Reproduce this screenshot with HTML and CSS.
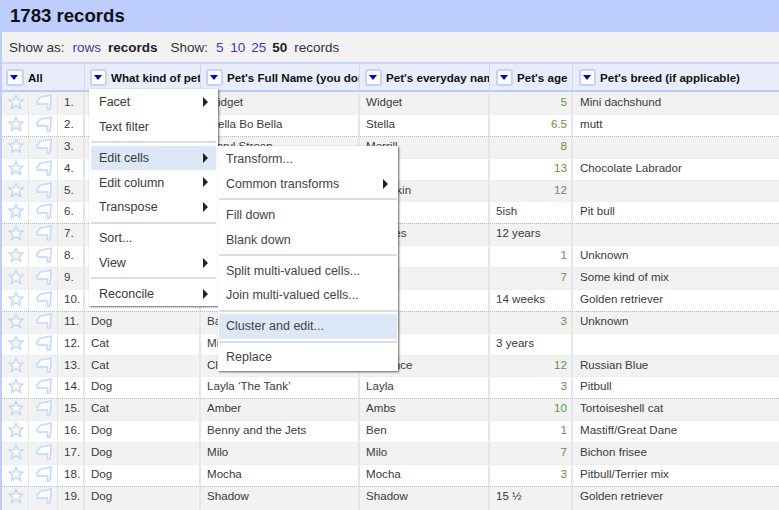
FILE: index.html
```html
<!DOCTYPE html>
<html lang="en">
<head>
<meta charset="utf-8">
<title>1783 records</title>
<link rel="stylesheet" href="styles.css">
</head>
<body>
<svg class="defs" width="0" height="0" aria-hidden="true">
  <symbol id="star" viewBox="0 0 16 16"><path d="M8 1.200 10 6h5.200l-4.100 3.300 1.600 5.300L8 11.500l-4.700 3.100 1.600-5.300L.8 6H6z" fill="#fff" stroke="#c3dcfb" stroke-width="1.600" stroke-linejoin="round"/></symbol>
  <symbol id="flag" viewBox="0 0 16 16"><path d="M.9 7.500 4.200 3.200C7 2.400 11 2.200 15.200 1.200L14.600 10 13.800 15 11.400 15.600 11.600 10C8.500 9.800 5 10.200 1.800 10.200Z" fill="#fff" stroke="#c3dcfb" stroke-width="1.700" stroke-linejoin="round"/></symbol>
</svg>
<main class="page">
  <h1 class="title">1783 records</h1>
  <div class="viewbar">
    <span>Show as:</span><a class="link gap-a">rows</a><b class="gap-b">records</b>
    <span class="gap-c">Show:</span><a class="link gap-d">5</a><a class="link gap-e">10</a><a class="link gap-f">25</a><b class="gap-f">50</b><span class="gap-g">records</span>
  </div>
  <div class="table">
    <div class="row head">
      <div class="hc c-all"><span class="btn"></span><span class="hname">All</span></div>
      <div class="hc c-kind"><span class="btn"></span><span class="hname">What kind of pet</span></div>
      <div class="hc c-name"><span class="btn"></span><span class="hname">Pet's Full Name (you don't have to)</span></div>
      <div class="hc c-day"><span class="btn"></span><span class="hname">Pet's everyday name</span></div>
      <div class="hc c-age"><span class="btn"></span><span class="hname">Pet's age</span></div>
      <div class="hc c-breed"><span class="btn"></span><span class="hname">Pet's breed (if applicable)</span></div>
    </div>
    <div class="row data odd"><div class="cell c-star"><svg class="ico"><use href="#star"/></svg></div><div class="cell c-flag"><svg class="ico"><use href="#flag"/></svg></div><div class="cell c-idx">1.</div><div class="cell c-kind">Dog</div><div class="cell c-name">Widget</div><div class="cell c-day">Widget</div><div class="cell c-age num">5</div><div class="cell c-breed">Mini dachshund</div></div>
    <div class="row data even"><div class="cell c-star"><svg class="ico"><use href="#star"/></svg></div><div class="cell c-flag"><svg class="ico"><use href="#flag"/></svg></div><div class="cell c-idx">2.</div><div class="cell c-kind">Dog</div><div class="cell c-name">Stella Bo Bella</div><div class="cell c-day">Stella</div><div class="cell c-age num">6.5</div><div class="cell c-breed">mutt</div></div>
    <div class="row data odd rec"><div class="cell c-star"><svg class="ico"><use href="#star"/></svg></div><div class="cell c-flag"><svg class="ico"><use href="#flag"/></svg></div><div class="cell c-idx">3.</div><div class="cell c-kind">Cat</div><div class="cell c-name">Meryl Streep</div><div class="cell c-day">Merrill</div><div class="cell c-age num">8</div><div class="cell c-breed"></div></div>
    <div class="row data even"><div class="cell c-star"><svg class="ico"><use href="#star"/></svg></div><div class="cell c-flag"><svg class="ico"><use href="#flag"/></svg></div><div class="cell c-idx">4.</div><div class="cell c-kind">Dog</div><div class="cell c-name">Coco</div><div class="cell c-day">Coco</div><div class="cell c-age num">13</div><div class="cell c-breed">Chocolate Labrador</div></div>
    <div class="row data odd"><div class="cell c-star"><svg class="ico"><use href="#star"/></svg></div><div class="cell c-flag"><svg class="ico"><use href="#flag"/></svg></div><div class="cell c-idx">5.</div><div class="cell c-kind">Cat</div><div class="cell c-name">Pumpkin</div><div class="cell c-day">Pumpkin</div><div class="cell c-age num">12</div><div class="cell c-breed"></div></div>
    <div class="row data even"><div class="cell c-star"><svg class="ico"><use href="#star"/></svg></div><div class="cell c-flag"><svg class="ico"><use href="#flag"/></svg></div><div class="cell c-idx">6.</div><div class="cell c-kind">Dog</div><div class="cell c-name">Roo</div><div class="cell c-day">Roo</div><div class="cell c-age">5ish</div><div class="cell c-breed">Pit bull</div></div>
    <div class="row data odd rec"><div class="cell c-star"><svg class="ico"><use href="#star"/></svg></div><div class="cell c-flag"><svg class="ico"><use href="#flag"/></svg></div><div class="cell c-idx">7.</div><div class="cell c-kind">Cat</div><div class="cell c-name">Hermes</div><div class="cell c-day">Hermes</div><div class="cell c-age">12 years</div><div class="cell c-breed"></div></div>
    <div class="row data even"><div class="cell c-star"><svg class="ico"><use href="#star"/></svg></div><div class="cell c-flag"><svg class="ico"><use href="#flag"/></svg></div><div class="cell c-idx">8.</div><div class="cell c-kind">Dog</div><div class="cell c-name">Rex</div><div class="cell c-day">Rex</div><div class="cell c-age num">1</div><div class="cell c-breed">Unknown</div></div>
    <div class="row data odd"><div class="cell c-star"><svg class="ico"><use href="#star"/></svg></div><div class="cell c-flag"><svg class="ico"><use href="#flag"/></svg></div><div class="cell c-idx">9.</div><div class="cell c-kind">Dog</div><div class="cell c-name">Max</div><div class="cell c-day">Max</div><div class="cell c-age num">7</div><div class="cell c-breed">Some kind of mix</div></div>
    <div class="row data even"><div class="cell c-star"><svg class="ico"><use href="#star"/></svg></div><div class="cell c-flag"><svg class="ico"><use href="#flag"/></svg></div><div class="cell c-idx">10.</div><div class="cell c-kind">Dog</div><div class="cell c-name">Sam</div><div class="cell c-day">Sam</div><div class="cell c-age">14 weeks</div><div class="cell c-breed">Golden retriever</div></div>
    <div class="row data odd rec"><div class="cell c-star"><svg class="ico"><use href="#star"/></svg></div><div class="cell c-flag"><svg class="ico"><use href="#flag"/></svg></div><div class="cell c-idx">11.</div><div class="cell c-kind">Dog</div><div class="cell c-name">Barnes</div><div class="cell c-day">Bones</div><div class="cell c-age num">3</div><div class="cell c-breed">Unknown</div></div>
    <div class="row data even"><div class="cell c-star"><svg class="ico"><use href="#star"/></svg></div><div class="cell c-flag"><svg class="ico"><use href="#flag"/></svg></div><div class="cell c-idx">12.</div><div class="cell c-kind">Cat</div><div class="cell c-name">Mia</div><div class="cell c-day">Mia</div><div class="cell c-age">3 years</div><div class="cell c-breed"></div></div>
    <div class="row data odd"><div class="cell c-star"><svg class="ico"><use href="#star"/></svg></div><div class="cell c-flag"><svg class="ico"><use href="#flag"/></svg></div><div class="cell c-idx">13.</div><div class="cell c-kind">Cat</div><div class="cell c-name">Clarence</div><div class="cell c-day">Clarence</div><div class="cell c-age num">12</div><div class="cell c-breed">Russian Blue</div></div>
    <div class="row data even"><div class="cell c-star"><svg class="ico"><use href="#star"/></svg></div><div class="cell c-flag"><svg class="ico"><use href="#flag"/></svg></div><div class="cell c-idx">14.</div><div class="cell c-kind">Dog</div><div class="cell c-name">Layla ‘The Tank’</div><div class="cell c-day">Layla</div><div class="cell c-age num">3</div><div class="cell c-breed">Pitbull</div></div>
    <div class="row data odd rec"><div class="cell c-star"><svg class="ico"><use href="#star"/></svg></div><div class="cell c-flag"><svg class="ico"><use href="#flag"/></svg></div><div class="cell c-idx">15.</div><div class="cell c-kind">Cat</div><div class="cell c-name">Amber</div><div class="cell c-day">Ambs</div><div class="cell c-age num">10</div><div class="cell c-breed">Tortoiseshell cat</div></div>
    <div class="row data even"><div class="cell c-star"><svg class="ico"><use href="#star"/></svg></div><div class="cell c-flag"><svg class="ico"><use href="#flag"/></svg></div><div class="cell c-idx">16.</div><div class="cell c-kind">Dog</div><div class="cell c-name">Benny and the Jets</div><div class="cell c-day">Ben</div><div class="cell c-age num">1</div><div class="cell c-breed">Mastiff/Great Dane</div></div>
    <div class="row data odd"><div class="cell c-star"><svg class="ico"><use href="#star"/></svg></div><div class="cell c-flag"><svg class="ico"><use href="#flag"/></svg></div><div class="cell c-idx">17.</div><div class="cell c-kind">Dog</div><div class="cell c-name">Milo</div><div class="cell c-day">Milo</div><div class="cell c-age num">7</div><div class="cell c-breed">Bichon frisee</div></div>
    <div class="row data even"><div class="cell c-star"><svg class="ico"><use href="#star"/></svg></div><div class="cell c-flag"><svg class="ico"><use href="#flag"/></svg></div><div class="cell c-idx">18.</div><div class="cell c-kind">Dog</div><div class="cell c-name">Mocha</div><div class="cell c-day">Mocha</div><div class="cell c-age num">3</div><div class="cell c-breed">Pitbull/Terrier mix</div></div>
    <div class="row data odd rec"><div class="cell c-star"><svg class="ico"><use href="#star"/></svg></div><div class="cell c-flag"><svg class="ico"><use href="#flag"/></svg></div><div class="cell c-idx">19.</div><div class="cell c-kind">Dog</div><div class="cell c-name">Shadow</div><div class="cell c-day">Shadow</div><div class="cell c-age">15 ½</div><div class="cell c-breed">Golden retriever</div></div>
  </div>
  <ul class="menu menu-main">
    <li class="mi arrow">Facet</li>
    <li class="mi">Text filter</li>
    <li class="sep"></li>
    <li class="mi arrow on">Edit cells</li>
    <li class="mi arrow">Edit column</li>
    <li class="mi arrow">Transpose</li>
    <li class="sep"></li>
    <li class="mi">Sort...</li>
    <li class="mi arrow">View</li>
    <li class="sep"></li>
    <li class="mi arrow">Reconcile</li>
  </ul>
  <ul class="menu menu-sub">
    <li class="mi">Transform...</li>
    <li class="mi arrow">Common transforms</li>
    <li class="sep"></li>
    <li class="mi">Fill down</li>
    <li class="mi">Blank down</li>
    <li class="sep"></li>
    <li class="mi">Split multi-valued cells...</li>
    <li class="mi">Join multi-valued cells...</li>
    <li class="sep"></li>
    <li class="mi on">Cluster and edit...</li>
    <li class="sep"></li>
    <li class="mi">Replace</li>
  </ul>
</main>
</body>
</html>
```
FILE: styles.css
```css
* { box-sizing: border-box; }
html, body { margin: 0; padding: 0; }
body {
  width: 779px;
  height: 510px;
  overflow: hidden;
  background: #fff;
  font-family: "Liberation Sans", Arial, sans-serif;
  color: #3a3a3a;
}
.defs { position: absolute; }
.page { position: relative; width: 779px; height: 510px; overflow: hidden; }
.title {
  margin: 0;
  height: 32px;
  padding: 6px 0 0 10px;
  background: #bdcdff;
  font-size: 18.600px;
  line-height: 20px;
  font-weight: 700;
  color: #111;
}
.viewbar {
  display: flex;
  align-items: center;
  height: 30px;
  padding-left: 7px;
  background: #f2f2f2;
  border-left: 2px solid #bdcdff;
  font-size: 13.500px;
  color: #333;
}
.viewbar b { color: #222; }
.link { color: #3c3ca8; }
.gap-a { margin-left: 8px; }
.gap-b { margin-left: 7px; }
.gap-c { margin-left: 13px; }
.gap-d { margin-left: 8px; }
.gap-e { margin-left: 6.500px; }
.gap-f { margin-left: 6px; }
.gap-g { margin-left: 7px; }
.table { border-left: 2px solid #bdcdff; }
.row { display: flex; }
.head {
  height: 30px;
  background: #e9edfb;
  border-top: 2px solid #ccd8fb;
  border-bottom: 2px solid #b9cdfd;
}
.hc {
  display: flex;
  align-items: center;
  overflow: hidden;
  white-space: nowrap;
  padding-left: 5px;
  border-right: 1px solid #ccd8fb;
  font-size: 11.600px;
  font-weight: 700;
  color: #111;
}
.btn {
  position: relative;
  flex: none;
  width: 17px;
  height: 17px;
  margin-right: 4px;
  background: #fff;
  border: 2px solid #c5d3fb;
  border-radius: 3px;
}
.btn::after {
  content: "";
  position: absolute;
  left: 2px;
  top: 4.500px;
  border-left: 4.500px solid transparent;
  border-right: 4.500px solid transparent;
  border-top: 5px solid #0000c8;
}
.hname { flex: none; }
.c-all { width: 83px; padding-left: 4px; }
.c-all .btn { width: 18px; }
.c-kind { width: 116px; }
.c-name { width: 159px; }
.c-day { width: 130px; }
.c-age { width: 83px; }
.c-breed { width: 206px; border-right: 0; }
.hc.c-age, .hc.c-breed { padding-left: 6px; }
.data { height: 21.890px; border-top: 1px solid #eee; font-size: 11.600px; line-height: 18px; }
.data:last-child { height: 24px; }
.data.odd { background: #f2f2f2; }
.data.even { background: #fff; }
.data.rec { border-top: 1px dotted #bbb; }
.cell {
  overflow: hidden;
  white-space: nowrap;
  padding: 0 6px;
  border-right: 2px solid #e6e6e6;
}
.cell.c-breed { padding-left: 7px; border-right: 0; }
.c-star { width: 27px; padding: 0 0 0 6px; border-right-width: 1px; }
.c-flag { width: 29px; padding: 0 0 0 7px; border-right-width: 1px; }
.c-idx { width: 27px; padding-left: 6px; }
.num { text-align: right; color: #5a9a3c; }
.cell.num { padding-right: 4px; }
.ico { display: block; width: 16px; height: 16px; margin-top: 1px; }
.menu {
  position: absolute;
  margin: 0;
  list-style: none;
  background: #fff;
  box-shadow: 1px 1px 2px rgba(0,0,0,.6);
  font-size: 12.500px;
}
.menu-main { left: 89px; top: 89px; width: 129px; height: 217px; padding: 1px 2px 0; z-index: 1; }
.menu-sub { left: 218px; top: 146px; width: 180px; height: 225px; padding: 1px 1px 0; z-index: 2; color: #444; }
.menu-sub .mi { padding-left: 7px; }
.menu-sub .mi.arrow::after { right: 9px; }
.mi {
  position: relative;
  height: 24.600px;
  line-height: 24.600px;
  padding-top: .3px;
  padding-left: 8px;
}
.mi.on { background: #dce8f7; }
.mi.arrow::after {
  content: "";
  position: absolute;
  right: 8px;
  top: 7px;
  border-top: 5px solid transparent;
  border-bottom: 5px solid transparent;
  border-left: 5px solid #222;
}
.sep { height: 6.500px; background: linear-gradient(#dcdcdc, #dcdcdc) center / 100% 2px no-repeat; }
```
